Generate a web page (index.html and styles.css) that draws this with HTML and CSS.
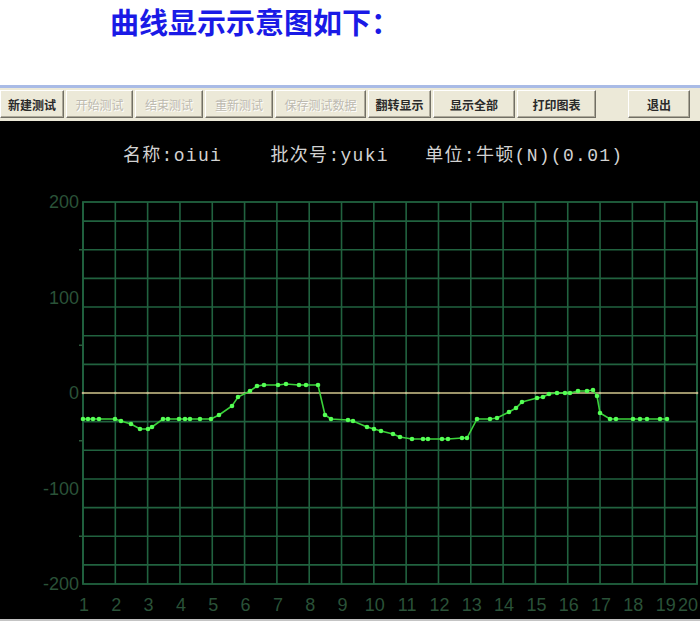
FILE: index.html
```html
<!DOCTYPE html>
<html lang="zh-CN">
<head>
    <meta charset="UTF-8">
    <title>曲线显示</title>
    <link rel="stylesheet" href="styles.css">
</head>
<body>

    <div class="page">
        <h1 class="title">曲线显示示意图如下：</h1>

        <!-- Toolbar -->
        <div class="toolbar">
            <button class="tool btn-new">新建测试</button>
            <button class="tool btn-start" disabled>开始测试</button>
            <button class="tool btn-end" disabled>结束测试</button>
            <button class="tool btn-redo" disabled>重新测试</button>
            <button class="tool btn-save" disabled>保存测试数据</button>
            <button class="tool btn-flip">翻转显示</button>
            <button class="tool btn-all">显示全部</button>
            <button class="tool btn-print">打印图表</button>
            <button class="tool btn-exit">退出</button>
        </div>

        <!-- Chart -->
        <div class="chart">
            <div class="chart-head">名称:oiui    批次号:yuki   单位:牛顿(N)(0.01)</div>
            <svg id="plot" class="plot" width="700" height="434" viewBox="0 0 700 434"></svg>
        </div>
    </div>

    <script>
(function () {
    const NS = 'http://www.w3.org/2000/svg';
    const plot = document.getElementById('plot');

    const plotLeft = 83, plotRight = 697, plotTop = 17, plotBottom = 399, zero = 208;
    const stepX = (plotRight - plotLeft) / 19;
    const unit = (plotBottom - plotTop) / 400;

    function add(tag, attrs, text) {
        const el = document.createElementNS(NS, tag);
        for (const k in attrs) el.setAttribute(k, attrs[k]);
        if (text !== undefined) el.textContent = text;
        plot.appendChild(el);
        return el;
    }

    // grid
    for (let i = 0; i <= 19; i++) {
        const x = plotLeft + i * stepX;
        add('line', { x1: x, y1: plotTop, x2: x, y2: plotBottom, class: 'grid' });
    }
    for (let v = -180; v <= 180; v += 30) {
        if (v === 0) continue;
        const y = zero - v * unit;
        add('line', { x1: plotLeft, y1: y, x2: plotRight, y2: y, class: 'grid' });
    }
    add('rect', { x: plotLeft, y: plotTop, width: plotRight - plotLeft, height: plotBottom - plotTop, class: 'frame' });

    // zero line
    add('line', { x1: plotLeft, y1: zero, x2: plotRight, y2: zero, class: 'zero' });
    for (let i = 0; i <= 19; i++) {
        add('circle', { cx: plotLeft + i * stepX, cy: zero, r: 1.3, class: 'zero-dot' });
    }

    // y axis
    [200, 100, 0, -100, -200].forEach(v => {
        const y = zero - v * unit;
        add('text', { x: 79, y: y + 6, class: 'ylabel' }, v);
    });
    [150, 50, -50, -150].forEach(v => {
        const y = zero - v * unit;
        add('line', { x1: 79, y1: y, x2: 83, y2: y, class: 'tick' });
    });

    // x axis
    for (let i = 0; i <= 19; i++) {
        const dx = i < 19 ? 1 : -9;
        add('text', { x: plotLeft + i * stepX + dx, y: 426, class: 'xlabel' }, i + 1);
    }

    // curve (page pixel coords)
    const points = [
        [83,419],[88,419],[93,419],[99,419],[115,419],[121,421],[131,424],[140,429],[148,429],
        [152,427],[163,419],[168,419],[179,419],[185,419],[190,419],[200,419],[211,419],[219,415],
        [232,406],[238,397],[250,391],[257,386],[264,385],[278,385],[286,384],[299,385],[306,385],
        [318,385],[325,415],[331,419],[348,420],[353,421],[367,427],[374,429],[381,431],[393,434],
        [400,437],[412,439],[423,439],[428,439],[442,439],[448,439],[462,438],[467,438],[477,419],
        [490,419],[497,418],[509,412],[516,408],[522,402],[537,398],[543,397],[549,394],[557,393],
        [565,393],[570,393],[578,391],[587,391],[593,390],[597,396],[600,413],[610,419],[616,419],
        [633,419],[640,419],[647,419],[660,419],[667,419]
    ];
    const pts = points.map(p => [p[0], p[1] - 185]);
    add('polyline', { points: pts.map(p => p.join(',')).join(' '), class: 'curve' });
    pts.forEach(p => add('circle', { cx: p[0], cy: p[1], r: 2.3, class: 'curve-dot' }));
})();
    </script>

</body>
</html>
```

FILE: styles.css
```css
body {
    margin: 0;
    padding: 0;
    background-color: #ffffff;
    font-family: "Noto Sans CJK SC", sans-serif;
}

.page {
    width: 700px;
    overflow: hidden;
}

.title {
    margin: 0;
    height: 85px;
    box-sizing: border-box;
    padding: 0 0 0 110px;
    font-size: 29px;
    line-height: 42px;
    font-weight: bold;
    color: #1a1ae6;
}

.toolbar {
    display: flex;
    gap: 2px;
    height: 36px;
    box-sizing: border-box;
    padding-top: 2px;
    background-color: #ece9d8;
    border-top: 3px solid #a9bbe6;
}

.tool {
    height: 28px;
    padding: 0;
    font-family: "Noto Sans CJK SC", sans-serif;
    font-size: 12px;
    font-weight: bold;
    color: #2a2a2a;
    background-color: #ece9d8;
    border: 1px solid;
    border-color: #ffffff #716f64 #716f64 #ffffff;
    box-shadow: inset -1px -1px 0 #aca899;
}

.tool:disabled {
    font-weight: normal;
    color: #bdbab0;
    text-shadow: 1px 1px 0 #ffffff;
}

.btn-new { width: 64px; }
.btn-start { width: 67px; }
.btn-end { width: 68px; }
.btn-redo { width: 68px; }
.btn-save { width: 91px; }
.btn-flip { width: 63px; }
.btn-all { width: 82px; }
.btn-print { width: 79px; }
.btn-exit { width: 62px; margin-left: 30px; }

.chart {
    background-color: #000000;
    height: 498px;
    border-bottom: 2px solid #c4c4c4;
}

.chart-head {
    height: 64px;
    box-sizing: border-box;
    padding: 24px 0 0 123px;
    font-family: "Liberation Mono", "Noto Sans CJK SC", monospace;
    font-size: 18px;
    line-height: 22px;
    letter-spacing: 1.3px;
    color: #d2d2d2;
    white-space: pre;
}

.plot {
    display: block;
}

.grid {
    stroke: #21623f;
    stroke-width: 1.6;
}

.frame {
    fill: none;
    stroke: #21623f;
    stroke-width: 1.8;
}

.zero {
    stroke: #9c946a;
    stroke-width: 2;
}

.zero-dot {
    fill: #bdb58c;
}

.tick {
    stroke: #2b5a3c;
    stroke-width: 1.5;
}

.ylabel {
    font-family: "Liberation Sans", Arial, sans-serif;
    font-size: 18px;
    fill: #2a5238;
    text-anchor: end;
}

.xlabel {
    font-family: "Liberation Sans", Arial, sans-serif;
    font-size: 18px;
    fill: #2a5238;
    text-anchor: middle;
}

.curve {
    fill: none;
    stroke: #3bd23b;
    stroke-width: 1.6;
}

.curve-dot {
    fill: #55ff55;
}
```
